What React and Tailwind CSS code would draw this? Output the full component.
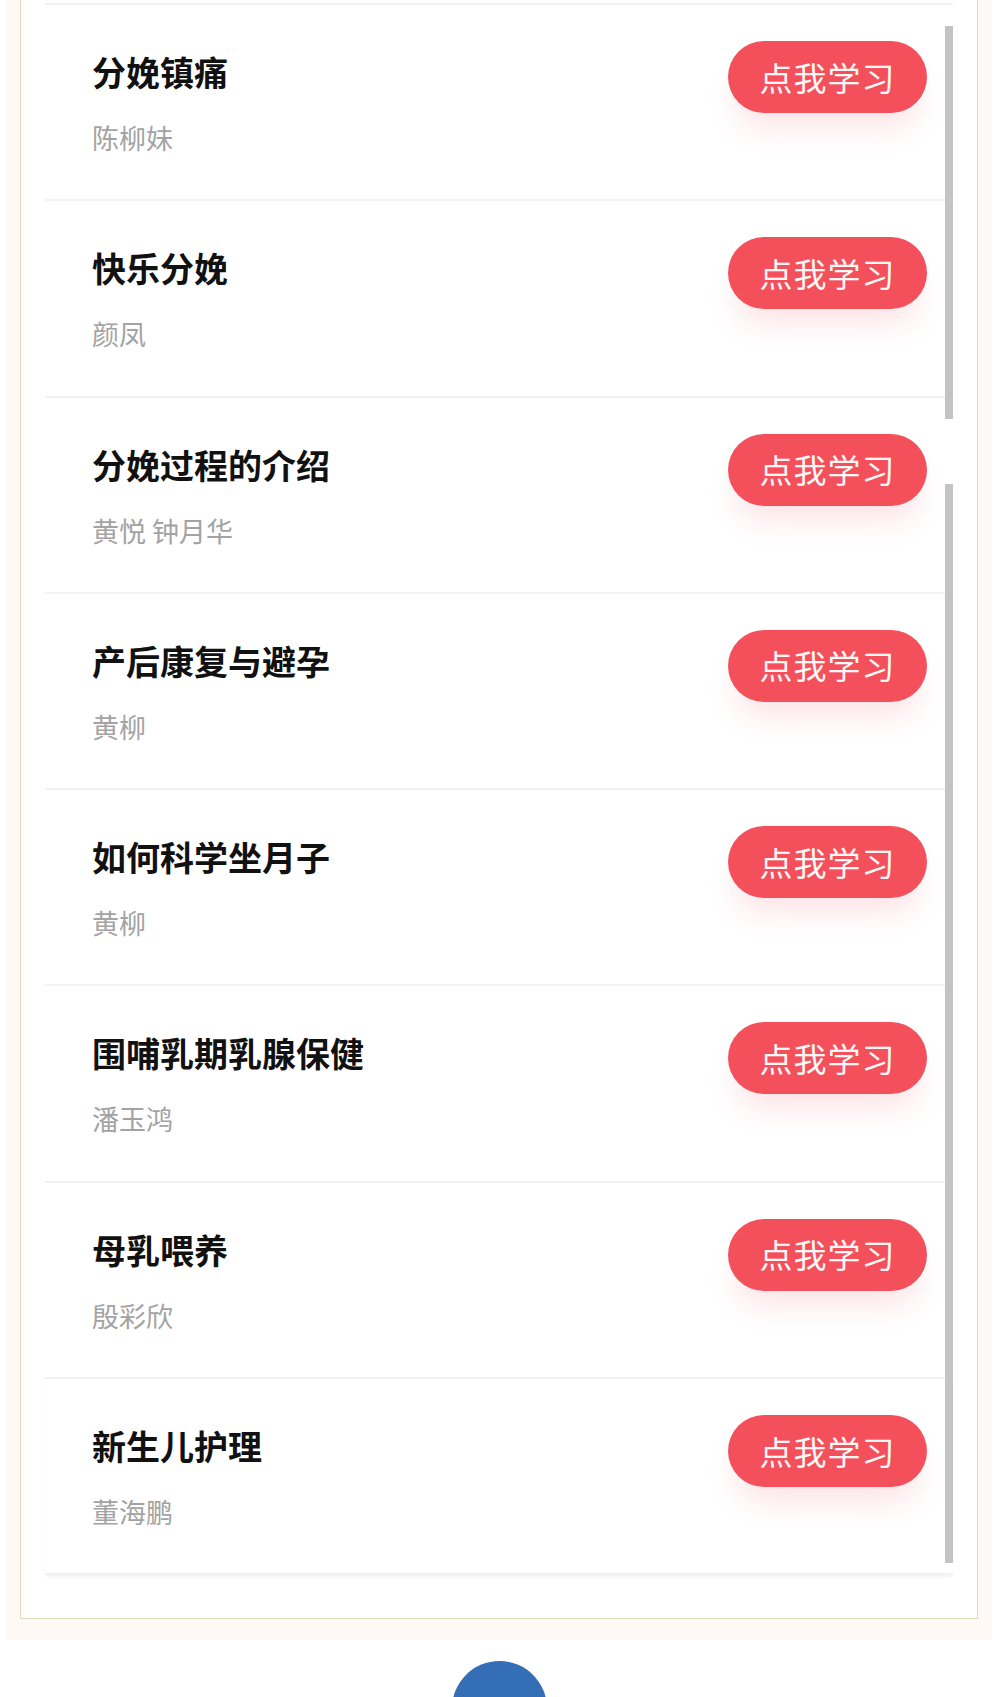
import React from 'react';

const courses = [
    { title: '分娩镇痛', teacher: '陈柳妹' },
    { title: '快乐分娩', teacher: '颜凤' },
    { title: '分娩过程的介绍', teacher: '黄悦 钟月华' },
    { title: '产后康复与避孕', teacher: '黄柳' },
    { title: '如何科学坐月子', teacher: '黄柳' },
    { title: '围哺乳期乳腺保健', teacher: '潘玉鸿' },
    { title: '母乳喂养', teacher: '殷彩欣' },
    { title: '新生儿护理', teacher: '董海鹏' },
];

const CourseRow = ({ course, last }) => (
    <div
        className={`h-[196.3px] box-border border-b-2 border-[#f2f2f2] flex justify-between items-start pl-[47px] pr-[26px] ${last ? 'shadow-[0_3px_3px_-1px_rgba(0,0,0,0.05)]' : ''}`}
    >
        <div className="pt-[47px]">
            <div className="text-[34px] leading-[40px] font-bold text-[#111111]">{course.title}</div>
            <div className="mt-[29px] text-[27px] leading-[34px] text-[#a3a3a3]">{course.teacher}</div>
        </div>
        <button className="mt-[36px] w-[199px] h-[72px] rounded-full bg-[#f4505c] text-[#fff8f6] text-[33px] leading-none tracking-[1px] shadow-[0_22px_30px_-8px_rgba(244,80,92,0.16)]">
            点我学习
        </button>
    </div>
);

const App = () => {
    return (
        <div
            className="w-full h-[1697px] overflow-hidden bg-white"
            style={{ fontFamily: '"Noto Sans CJK SC", "Noto Sans", sans-serif' }}
        >
            {/* beige frame around the course list */}
            <div className="mx-[6px] bg-[#fef9f5] px-[14px] pb-[21px]">
                <div className="bg-white border-x border-b border-[#dbd9bb] px-[24px] pt-[3px] pb-[43px]">
                    <div className="relative">
                        <div className="h-[2px] bg-[#f2f2f2]"></div>
                        {courses.map((c, i) => (
                            <CourseRow key={i} course={c} last={i === courses.length - 1} />
                        ))}

                        {/* scrollbar thumb pieces */}
                        <div className="absolute right-0 top-[23px] w-[8px] h-[393px] bg-[#c3c3c3]"></div>
                        <div className="absolute right-0 top-[481px] w-[8px] h-[1079px] bg-[#c3c3c3]"></div>
                    </div>
                </div>
            </div>

            <div className="mt-[21px] mx-auto w-[95px] h-[95px] rounded-full bg-[#346fb5]"></div>
        </div>
    );
};

export default App;
